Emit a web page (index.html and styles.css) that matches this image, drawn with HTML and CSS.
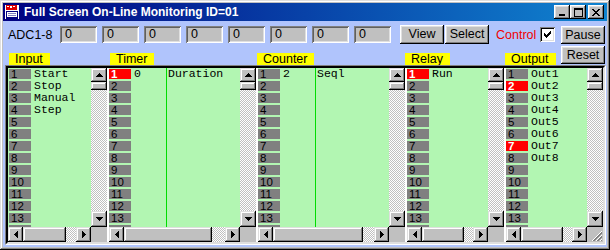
FILE: index.html
```html
<!DOCTYPE html>
<html>
<head>
<meta charset="utf-8">
<title>Full Screen On-Line Monitoring</title>
<link rel="stylesheet" href="styles.css">
</head>
<body>
<div class="window">
  <div class="titlebar">
    <svg class="appicon" width="16" height="16" viewBox="0 0 16 16" shape-rendering="crispEdges">
      <rect x="1" y="1" width="14" height="14" fill="#fff"/>
      <rect x="2" y="1" width="11" height="5" fill="#e00000"/>
      <rect x="3" y="2" width="2" height="1" fill="#fff"/><rect x="6" y="2" width="2" height="2" fill="#fff"/><rect x="9" y="2" width="2" height="1" fill="#fff"/>
      <rect x="2" y="7" width="12" height="1" fill="#000080"/>
      <rect x="2" y="8" width="1" height="5" fill="#000080"/><rect x="13" y="8" width="1" height="5" fill="#000080"/>
      <rect x="4" y="9" width="8" height="1" fill="#8080c0"/><rect x="4" y="11" width="8" height="1" fill="#8080c0"/>
      <rect x="2" y="13" width="12" height="2" fill="#000080"/>
    </svg>
    <span class="title">Full Screen On-Line Monitoring ID=01</span>
    <div class="tbtns">
      <div class="tbtn"><svg width="8" height="7" viewBox="0 0 8 7" shape-rendering="crispEdges"><rect x="1" y="5" width="6" height="2"/></svg></div>
      <div class="tbtn"><svg width="9" height="9" viewBox="0 0 9 9" shape-rendering="crispEdges"><path fill-rule="evenodd" d="M0 0h9v9H0z M1 2v6h7V2z"/></svg></div>
      <div class="tbtn close"><svg width="8" height="7" viewBox="0 0 8 7" shape-rendering="crispEdges"><path d="M0 0h2v1h1v1h2V1h1V0h2v1H7v1H6v1H5v1h1v1h1v1h1v1H6V6H5V5H3v1H2v1H0V6h1V5h1V4h1V3H2V2H1V1H0z"/></svg></div>
    </div>
  </div>
  <div class="client">
    <div class="header">
      <div class="hleft">
        <div class="adcrow">
          <span class="adclabel">ADC1-8</span>
          <div class="fields">
            <div class="field">0</div><div class="field">0</div><div class="field">0</div><div class="field">0</div>
            <div class="field">0</div><div class="field">0</div><div class="field">0</div><div class="field">0</div>
          </div>
          <div class="btn view">View</div>
          <div class="btn select">Select</div>
          <span class="control">Control</span>
          <div class="checkbox"><svg width="7" height="7" viewBox="0 0 7 7" shape-rendering="crispEdges"><path d="M6 0h1v3H6v1H5v1H4v1H3v1H2V6H1V5H0V2h1v1h1v1h1V3h1V2h1V1h1z"/></svg></div>
        </div>
        <div class="labels">
          <div class="lcell"><span class="label">Input</span></div>
          <div class="lcell"><span class="label">Timer</span></div>
          <div class="lcell"><span class="label">Counter</span></div>
          <div class="lcell"><span class="label">Relay</span></div>
          <div class="lcell"><span class="label">Output</span></div>
        </div>
      </div>
      <div class="hright">
        <div class="btn side">Pause</div>
        <div class="btn side reset">Reset</div>
      </div>
    </div>

    <div class="panelbox">
      <div class="panels">

        <!-- Input -->
        <div class="panel w99">
          <div class="list pad1">
            <div class="nums">
              <div class="n">1</div><div class="n">2</div><div class="n">3</div><div class="n">4</div><div class="n">5</div><div class="n">6</div><div class="n">7</div>
              <div class="n">8</div><div class="n">9</div><div class="n">10</div><div class="n">11</div><div class="n">12</div><div class="n">13</div><div class="n"></div>
            </div>
            <div class="names">
              <div class="t">Start</div><div class="t">Stop</div><div class="t">Manual</div><div class="t">Step</div>
            </div>
          </div>
          <div class="vscroll">
            <div class="sbtn up"><svg width="7" height="4" viewBox="0 0 7 4" shape-rendering="crispEdges"><path d="M3 0h1v1h1v1h1v1h1v1H0V3h1V2h1V1h1z"/></svg></div>
            <div class="vthumb"></div>
            <div class="track"></div>
            <div class="sbtn down"><svg width="7" height="4" viewBox="0 0 7 4" shape-rendering="crispEdges"><path d="M0 0h7v1H6v1H5v1H4v1H3V3H2V2H1V1H0z"/></svg></div>
          </div>
          <div class="hscroll">
            <div class="sbtn hb"><svg width="4" height="7" viewBox="0 0 4 7" shape-rendering="crispEdges"><path d="M4 0v7H3V6H2V5H1V4H0V3h1V2h1V1h1V0z"/></svg></div>
            <div class="hthumb" style="width:43px"></div>
            <div class="track"></div>
            <div class="sbtn hb"><svg width="4" height="7" viewBox="0 0 4 7" shape-rendering="crispEdges"><path d="M0 0h1v1h1v1h1v1h1v1H3v1H2v1H1v1H0z"/></svg></div>
          </div>
          <div class="corner"></div>
        </div>

        <!-- Timer -->
        <div class="panel w147">
          <div class="list">
            <div class="nums">
              <div class="n on">1</div><div class="n">2</div><div class="n">3</div><div class="n">4</div><div class="n">5</div><div class="n">6</div><div class="n">7</div>
              <div class="n">8</div><div class="n">9</div><div class="n">10</div><div class="n">11</div><div class="n">12</div><div class="n">13</div><div class="n"></div>
            </div>
            <div class="vals"><div class="t">0</div></div>
            <div class="names split"><div class="t">Duration</div></div>
          </div>
          <div class="vscroll">
            <div class="sbtn up"><svg width="7" height="4" viewBox="0 0 7 4" shape-rendering="crispEdges"><path d="M3 0h1v1h1v1h1v1h1v1H0V3h1V2h1V1h1z"/></svg></div>
            <div class="vthumb"></div>
            <div class="track"></div>
            <div class="sbtn down"><svg width="7" height="4" viewBox="0 0 7 4" shape-rendering="crispEdges"><path d="M0 0h7v1H6v1H5v1H4v1H3V3H2V2H1V1H0z"/></svg></div>
          </div>
          <div class="hscroll">
            <div class="sbtn hb"><svg width="4" height="7" viewBox="0 0 4 7" shape-rendering="crispEdges"><path d="M4 0v7H3V6H2V5H1V4H0V3h1V2h1V1h1V0z"/></svg></div>
            <div class="hthumb" style="width:88px"></div>
            <div class="track"></div>
            <div class="sbtn hb"><svg width="4" height="7" viewBox="0 0 4 7" shape-rendering="crispEdges"><path d="M0 0h1v1h1v1h1v1h1v1H3v1H2v1H1v1H0z"/></svg></div>
          </div>
          <div class="corner"></div>
        </div>

        <!-- Counter -->
        <div class="panel w147">
          <div class="list">
            <div class="nums">
              <div class="n">1</div><div class="n">2</div><div class="n">3</div><div class="n">4</div><div class="n">5</div><div class="n">6</div><div class="n">7</div>
              <div class="n">8</div><div class="n">9</div><div class="n">10</div><div class="n">11</div><div class="n">12</div><div class="n">13</div><div class="n"></div>
            </div>
            <div class="vals"><div class="t">2</div></div>
            <div class="names split"><div class="t">Seql</div></div>
          </div>
          <div class="vscroll">
            <div class="sbtn up"><svg width="7" height="4" viewBox="0 0 7 4" shape-rendering="crispEdges"><path d="M3 0h1v1h1v1h1v1h1v1H0V3h1V2h1V1h1z"/></svg></div>
            <div class="vthumb"></div>
            <div class="track"></div>
            <div class="sbtn down"><svg width="7" height="4" viewBox="0 0 7 4" shape-rendering="crispEdges"><path d="M0 0h7v1H6v1H5v1H4v1H3V3H2V2H1V1H0z"/></svg></div>
          </div>
          <div class="hscroll">
            <div class="sbtn hb"><svg width="4" height="7" viewBox="0 0 4 7" shape-rendering="crispEdges"><path d="M4 0v7H3V6H2V5H1V4H0V3h1V2h1V1h1V0z"/></svg></div>
            <div class="hthumb" style="width:90px"></div>
            <div class="track"></div>
            <div class="sbtn hb"><svg width="4" height="7" viewBox="0 0 4 7" shape-rendering="crispEdges"><path d="M0 0h1v1h1v1h1v1h1v1H3v1H2v1H1v1H0z"/></svg></div>
          </div>
          <div class="corner"></div>
        </div>

        <!-- Relay -->
        <div class="panel w97">
          <div class="list">
            <div class="nums">
              <div class="n on">1</div><div class="n">2</div><div class="n">3</div><div class="n">4</div><div class="n">5</div><div class="n">6</div><div class="n">7</div>
              <div class="n">8</div><div class="n">9</div><div class="n">10</div><div class="n">11</div><div class="n">12</div><div class="n">13</div><div class="n"></div>
            </div>
            <div class="names"><div class="t">Run</div></div>
          </div>
          <div class="vscroll">
            <div class="sbtn up"><svg width="7" height="4" viewBox="0 0 7 4" shape-rendering="crispEdges"><path d="M3 0h1v1h1v1h1v1h1v1H0V3h1V2h1V1h1z"/></svg></div>
            <div class="vthumb"></div>
            <div class="track"></div>
            <div class="sbtn down"><svg width="7" height="4" viewBox="0 0 7 4" shape-rendering="crispEdges"><path d="M0 0h7v1H6v1H5v1H4v1H3V3H2V2H1V1H0z"/></svg></div>
          </div>
          <div class="hscroll">
            <div class="sbtn hb"><svg width="4" height="7" viewBox="0 0 4 7" shape-rendering="crispEdges"><path d="M4 0v7H3V6H2V5H1V4H0V3h1V2h1V1h1V0z"/></svg></div>
            <div class="hthumb" style="width:42px"></div>
            <div class="track"></div>
            <div class="sbtn hb"><svg width="4" height="7" viewBox="0 0 4 7" shape-rendering="crispEdges"><path d="M0 0h1v1h1v1h1v1h1v1H3v1H2v1H1v1H0z"/></svg></div>
          </div>
          <div class="corner"></div>
        </div>

        <!-- Output -->
        <div class="panel w97">
          <div class="list">
            <div class="nums">
              <div class="n">1</div><div class="n on">2</div><div class="n">3</div><div class="n">4</div><div class="n">5</div><div class="n">6</div><div class="n on">7</div>
              <div class="n">8</div><div class="n">9</div><div class="n">10</div><div class="n">11</div><div class="n">12</div><div class="n">13</div><div class="n"></div>
            </div>
            <div class="names">
              <div class="t">Out1</div><div class="t">Out2</div><div class="t">Out3</div><div class="t">Out4</div>
              <div class="t">Out5</div><div class="t">Out6</div><div class="t">Out7</div><div class="t">Out8</div>
            </div>
          </div>
          <div class="vscroll">
            <div class="sbtn up"><svg width="7" height="4" viewBox="0 0 7 4" shape-rendering="crispEdges"><path d="M3 0h1v1h1v1h1v1h1v1H0V3h1V2h1V1h1z"/></svg></div>
            <div class="vthumb"></div>
            <div class="track"></div>
            <div class="sbtn down"><svg width="7" height="4" viewBox="0 0 7 4" shape-rendering="crispEdges"><path d="M0 0h7v1H6v1H5v1H4v1H3V3H2V2H1V1H0z"/></svg></div>
          </div>
          <div class="hscroll">
            <div class="sbtn hb"><svg width="4" height="7" viewBox="0 0 4 7" shape-rendering="crispEdges"><path d="M4 0v7H3V6H2V5H1V4H0V3h1V2h1V1h1V0z"/></svg></div>
            <div class="hthumb" style="width:42px"></div>
            <div class="track"></div>
            <div class="sbtn hb"><svg width="4" height="7" viewBox="0 0 4 7" shape-rendering="crispEdges"><path d="M0 0h1v1h1v1h1v1h1v1H3v1H2v1H1v1H0z"/></svg></div>
          </div>
          <div class="corner grip">
            <svg width="12" height="12" viewBox="0 0 12 12" shape-rendering="crispEdges">
              <path d="M11 1L1 11M11 5L5 11M11 9L9 11" stroke="#fff" fill="none"/>
              <path d="M11 2L2 11M11 3L3 11M11 6L6 11M11 7L7 11M11 10L10 11" stroke="#808080" fill="none"/>
            </svg>
          </div>
        </div>

      </div>
    </div>
  </div>
</div>
</body>
</html>
```

FILE: styles.css
```css
* { box-sizing: border-box; }
html, body { margin: 0; padding: 0; }
body {
  width: 610px;
  height: 250px;
  overflow: hidden;
  background: #c0c0c0;
  font-family: "Liberation Sans", Arial, sans-serif;
  font-size: 12px;
  color: #000;
}

.window {
  width: 610px;
  height: 250px;
  padding: 3px;
  background: #c0c0c0;
  box-shadow: inset -1px -1px #000, inset 1px 1px #dfdfdf, inset -2px -2px #808080, inset 2px 2px #fff;
  display: flex;
  flex-direction: column;
}

/* title bar */
.titlebar {
  flex: none;
  height: 18px;
  display: flex;
  align-items: center;
  background: linear-gradient(90deg, #000080 0%, #1084d0 100%);
  color: #fff;
}
.appicon { flex: none; margin-left: 1px; }
.title {
  margin-left: 4px;
  font-weight: bold;
  font-size: 12px;
  white-space: nowrap;
}
.tbtns { margin-left: auto; margin-right: 3px; display: flex; }
.tbtn {
  width: 16px;
  height: 14px;
  background: #c0c0c0;
  box-shadow: inset -1px -1px #000, inset 1px 1px #fff, inset -2px -2px #808080, inset 2px 2px #dfdfdf;
  display: flex;
  align-items: center;
  justify-content: center;
}
.tbtn svg { display: block; }
.tbtn.close { margin-left: 2px; }

/* client */
.client {
  flex: 1;
  background: #b0c4fc;
  display: flex;
  flex-direction: column;
}
.header { flex: none; height: 44px; display: flex; }
.hleft { width: 558px; display: flex; flex-direction: column; }
.hright { width: 44px; display: flex; flex-direction: column; }

.adcrow {
  margin-top: 4px;
  height: 19px;
  display: flex;
  align-items: center;
  font-size: 12.5px;
}
.adclabel { margin-left: 5px; width: 52px; white-space: nowrap; }
.fields { display: flex; gap: 5px; }
.field {
  width: 37px;
  height: 17px;
  padding-left: 5px;
  line-height: 17px;
  background: #c0c0c0;
  box-shadow: inset 1px 1px #808080, inset -1px -1px #fff, inset 2px 2px #606060, inset -2px -2px #dfdfdf;
}

.btn {
  height: 19px;
  width: 44px;
  text-align: center;
  line-height: 19px;
  font-size: 12.5px;
  background: #c0c0c0;
  box-shadow: inset -1px -1px #000, inset 1px 1px #fff, inset -2px -2px #808080, inset 2px 2px #dfdfdf;
}
.view { margin-left: 9px; }
.select { margin-left: 1px; }
.control { margin-left: 7px; width: 44px; color: #f00000; white-space: nowrap; }
.checkbox {
  width: 15px;
  height: 15px;
  background: #fff;
  box-shadow: inset 1px 1px #808080, inset -1px -1px #fff, inset 2px 2px #000, inset -2px -2px #dfdfdf;
  display: flex;
  align-items: center;
  justify-content: center;
}
.checkbox svg { display: block; }

.side { height: 18px; line-height: 18px; margin-top: 5px; }
.side.reset { margin-top: 2px; }

.labels {
  margin-top: 8px;
  height: 13px;
  padding-left: 6px;
  display: grid;
  grid-template-columns: 101px 147px 148px 100px 1fr;
}
.label {
  display: inline-block;
  height: 13px;
  line-height: 13px;
  padding: 0 7px 0 6px;
  background: #ffff00;
  font-size: 12.5px;
}

/* panels */
.panelbox {
  margin-left: 2px;
  width: 601px;
  height: 180px;
  border: 1px solid;
  border-color: #808080 #fff #fff #808080;
}
.panels {
  height: 100%;
  display: flex;
  gap: 2px;
  background: #fff;
  border: 2px solid;
  border-color: #000 #dfdfdf #dfdfdf #000;
}
.panel {
  height: 100%;
  display: grid;
  grid-template-columns: 1fr 16px;
  grid-template-rows: 1fr 15px;
  background: #c0c0c0;
}
.w99 { width: 99px; }
.w147 { width: 147px; }
.w97 { width: 97px; }

.list {
  background: #b2f6b2;
  overflow: hidden;
  display: flex;
  min-width: 0;
}
.list.pad1 { padding-left: 1px; }
.nums { flex: none; width: 22px; padding-top: 1px; }
.n {
  height: 10px;
  margin-bottom: 2px;
  padding-left: 2px;
  background: #808080;
  color: #000;
  font-size: 11.5px;
  line-height: 10px;
  white-space: nowrap;
}
.n.on { background: #ff0000; color: #fff; font-weight: bold; }

.vals, .names {
  font-family: "Liberation Mono", "Courier New", monospace;
  font-size: 11.5px;
  line-height: 12px;
  white-space: nowrap;
}
.vals { flex: none; width: 35px; padding-left: 3px; }
.names { flex: 1; padding-left: 3px; overflow: hidden; }
.names.split { border-left: 1px solid #00dd00; padding-left: 1px; }
.t { height: 12px; }

.vscroll {
  display: flex;
  flex-direction: column;
  background: #c0c0c0;
}
.sbtn {
  flex: none;
  background: #c0c0c0;
  box-shadow: inset -1px -1px #000, inset 1px 1px #dfdfdf, inset -2px -2px #808080, inset 2px 2px #fff;
  display: flex;
  align-items: center;
  justify-content: center;
}
.sbtn svg { display: block; }
.sbtn.up { height: 14px; }
.sbtn.down { height: 16px; }
.sbtn.hb { width: 15px; height: 15px; }
.vthumb {
  flex: none;
  height: 8px;
  background: #c0c0c0;
  box-shadow: inset -1px -1px #000, inset 1px 1px #dfdfdf, inset -2px -2px #808080, inset 2px 2px #fff;
}
.hthumb {
  flex: none;
  height: 15px;
  background: #c0c0c0;
  box-shadow: inset -1px -1px #000, inset 1px 1px #dfdfdf, inset -2px -2px #808080, inset 2px 2px #fff;
}
.track {
  flex: 1;
  background-color: #fff;
  background-image: conic-gradient(#c0c0c0 25%, #fff 0 50%, #c0c0c0 0 75%, #fff 0);
  background-size: 2px 2px;
}
.hscroll { display: flex; min-width: 0; }
.corner { background: #c0c0c0; }
.corner.grip { display: flex; align-items: flex-end; justify-content: flex-end; }
.corner.grip svg { display: block; }
```
